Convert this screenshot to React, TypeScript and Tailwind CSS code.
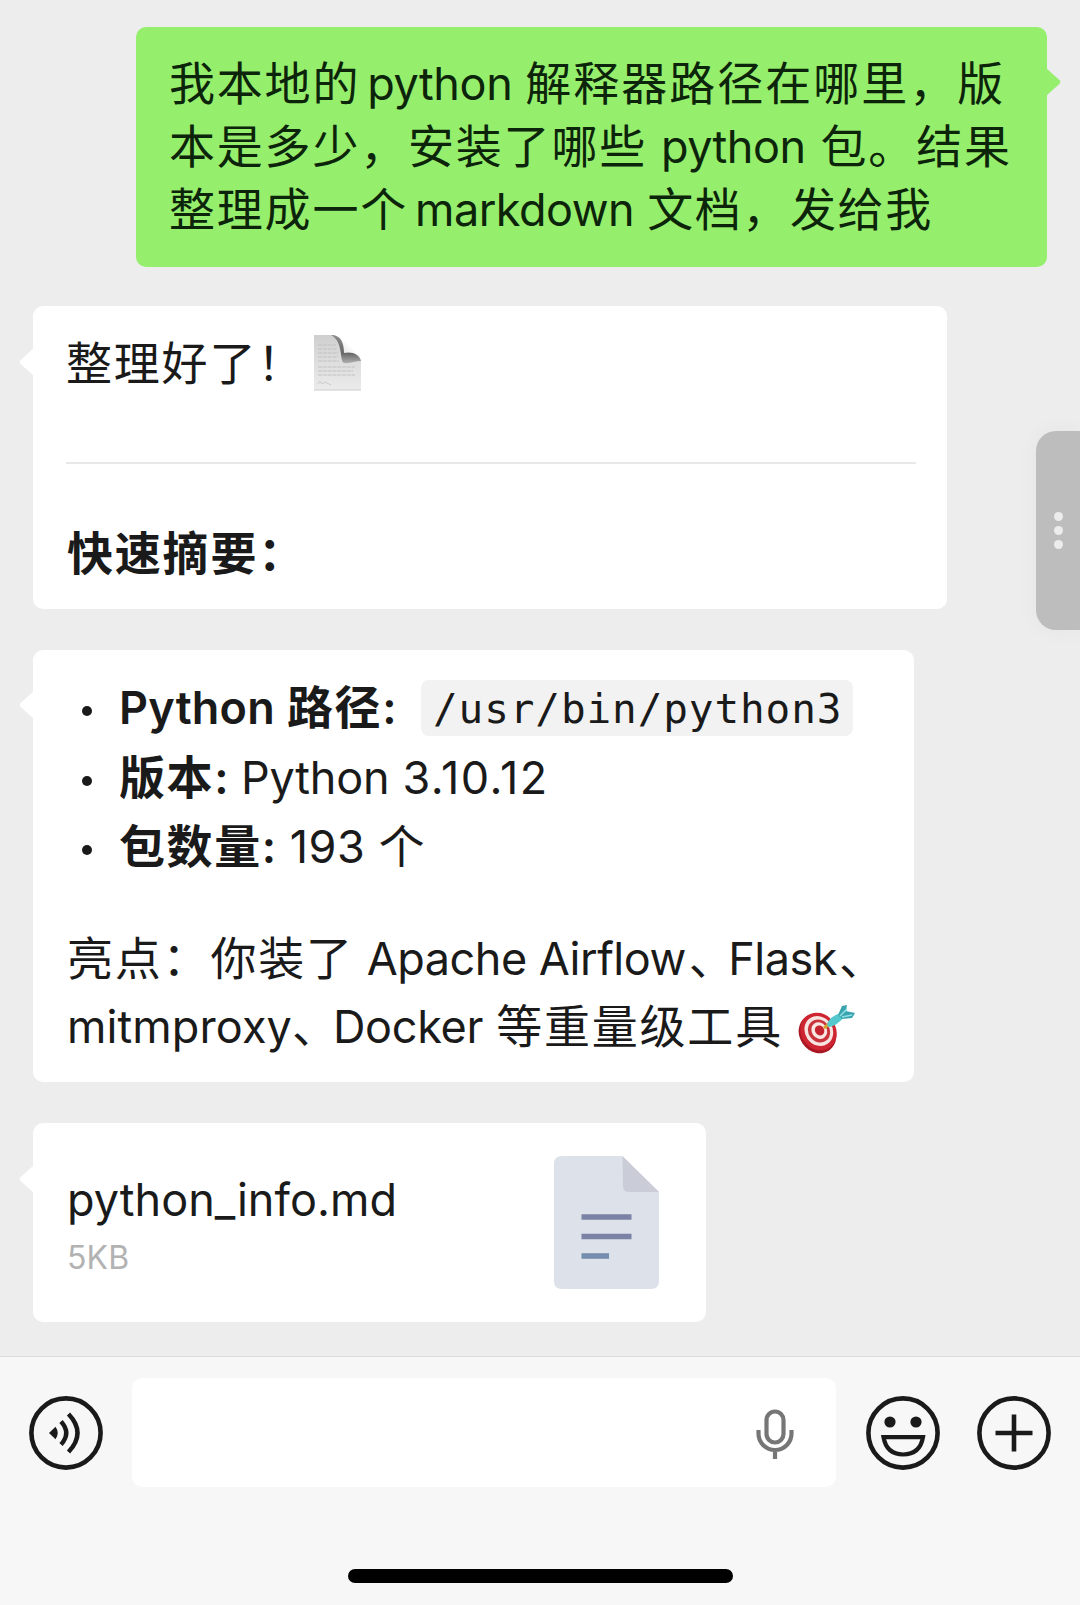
import type { ReactNode } from "react";

const Zh = ({ children, className = "tracking-[1.8px]" }: { children: ReactNode; className?: string }) => (
  <span className={`font-['Noto_Sans_CJK_SC',sans-serif] text-[46px] leading-none ${className}`}>{children}</span>
);

const En = ({ children, className = "tracking-[-0.5px]" }: { children: ReactNode; className?: string }) => (
  <span className={`leading-none ${className}`}>{children}</span>
);

const Tail = ({ side, className }: { side: "left" | "right"; className: string }) => (
  <svg
    className={`absolute ${side === "left" ? "-left-[14px]" : "-right-[14px] -scale-x-100"} ${className}`}
    width="15"
    height="30"
    viewBox="0 0 15 30"
    fill="currentColor"
  >
    <path d="M15 1L1.400 13.200Q0 15 1.400 16.800L15 29Z" />
  </svg>
);

const PageEmoji = () => (
  <svg className="inline-block align-top ml-[8px] mt-[2px]" width="50" height="58" viewBox="0 0 50 58">
    <defs>
      <linearGradient id="paper" x1="0" y1="0" x2="0" y2="1">
        <stop offset="0" stopColor="#cfcfcf" />
        <stop offset="0.5" stopColor="#dedede" />
        <stop offset="1" stopColor="#ebebeb" />
      </linearGradient>
      <linearGradient id="fold" x1="1" y1="0" x2="0" y2="1">
        <stop offset="0.4" stopColor="#ffffff" />
        <stop offset="0.75" stopColor="#e2e2e2" />
        <stop offset="1" stopColor="#8a8a8a" />
      </linearGradient>
      <linearGradient id="shade" x1="0" y1="0" x2="0" y2="1">
        <stop offset="0" stopColor="#8c8c8c" />
        <stop offset="0.65" stopColor="#686868" />
        <stop offset="1" stopColor="#b0b0b0" />
      </linearGradient>
    </defs>
    <path d="M1 1H20C27 2 46 19 48 27V56H1Z" fill="url(#paper)" />
    <path d="M22 1C27 4 29 9 30 18L48 27C47 18 32 3 22 1Z" fill="url(#fold)" />
    <path d="M18 1C28 1 31 9 31 19C38 17 47 20 48 27C42 27 37 30 31 29C26 27 31 8 18 1Z" fill="url(#shade)" />
    <path
      d="M5 11H23M5 15H24M5 19H25M5 23H25M5 27H26M5 33H42M5 37H40M5 41H42"
      stroke="#c2c2c2"
      strokeWidth="1"
      strokeDasharray="4 0.8"
    />
    <path d="M5 50L7 47L9 50L12 48L18 51" stroke="#cacaca" fill="none" />
    <path d="M1 56H48" stroke="#cccccc" />
  </svg>
);

const DartEmoji = () => (
  <svg className="inline-block align-top ml-[13px] mt-[11px]" width="60" height="50" viewBox="0 0 60 50">
    <ellipse cx="21.5" cy="29.5" rx="18" ry="20.5" transform="rotate(-35 21.5 29.5)" fill="#a91722" />
    <ellipse cx="22.5" cy="27.5" rx="17.5" ry="19.5" transform="rotate(-35 22.5 27.5)" fill="#cf2431" />
    <ellipse cx="22.8" cy="27" rx="13.8" ry="15.5" transform="rotate(-35 22.8 27)" fill="#f7e3df" />
    <ellipse cx="23" cy="27" rx="10.6" ry="12" transform="rotate(-35 23 27)" fill="#c9333c" />
    <ellipse cx="23.3" cy="26.6" rx="7.6" ry="8.6" transform="rotate(-35 23.3 26.6)" fill="#f9e6e2" />
    <ellipse cx="23.6" cy="26.4" rx="4.5" ry="5.2" transform="rotate(-35 23.6 26.4)" fill="#c4232f" />
    <path d="M28 24L33 20" stroke="#d8a32c" strokeWidth="3" />
    <path d="M31 21C32 15 38 11 45 9L48 13C44 18 39 22 33 23Z" fill="#55c8ce" />
    <path d="M42 11L46 2L51 1L50 7L59 9L56 14L46 15Z" fill="#3aa3ae" />
    <path d="M44 12L51 5M46 13L56 11" stroke="#8ee0e4" strokeWidth="1.6" />
  </svg>
);

const FileIcon = () => (
  <svg width="105" height="133" viewBox="0 0 105 133">
    <path d="M8 0H68L105 36V125Q105 133 97 133H8Q0 133 0 125V8Q0 0 8 0Z" fill="#dde1ea" />
    <path d="M68.500 0L105 36H75Q69 36 69 30Z" fill="#cacdd7" />
    <path d="M27.500 61H77.500M27.500 80.500H77.500" stroke="#7b82a5" strokeWidth="5.600" />
    <path d="M27.500 100H55" stroke="#778db0" strokeWidth="5.600" />
  </svg>
);

const VoiceIcon = () => (
  <svg width="74" height="74" viewBox="0 0 74 74" fill="none" stroke="#1a1a1a" strokeWidth="4.600">
    <circle cx="37" cy="37" r="34.600" />
    <path d="M20 37L26.500 30.800Q31 37 26.500 43.200Z" fill="#1a1a1a" stroke="none" />
    <path d="M32 25.500Q42.500 37 32 48.500" strokeWidth="4.400" />
    <path d="M39.500 18Q57.500 37 39.500 56" strokeWidth="4.400" />
  </svg>
);

const SmileIcon = () => (
  <svg width="74" height="74" viewBox="0 0 74 74" fill="none" stroke="#1a1a1a" strokeWidth="4.600">
    <circle cx="37" cy="37" r="34.600" />
    <circle cx="24" cy="26" r="5.600" fill="#1a1a1a" stroke="none" />
    <circle cx="50" cy="26" r="5.600" fill="#1a1a1a" stroke="none" />
    <path d="M17.500 41.200H57Q54 58.500 37.200 58.500Q20.500 58.500 17.500 41.200Z" strokeWidth="4.200" />
  </svg>
);

const PlusIcon = () => (
  <svg width="74" height="74" viewBox="0 0 74 74" fill="none" stroke="#1a1a1a" strokeWidth="4.600">
    <circle cx="37" cy="37" r="34.600" />
    <path d="M37 18.500V55.500M18.500 37H55.500" />
  </svg>
);

const MicIcon = () => (
  <svg width="38" height="50" viewBox="0 0 38 50" fill="none" stroke="#767676" strokeWidth="4.200">
    <rect x="10.500" y="2.500" width="17" height="31" rx="8.500" />
    <path d="M2.500 21V24.500A16.500 16.500 0 0 0 35.500 24.500V21M19 41V50" />
  </svg>
);

const facts = [
  {
    label: (
      <>
        <En className="mr-[12px] tracking-[0.2px]">Python</En>
        <Zh className="font-bold tracking-[1.6px]">路径</Zh>
      </>
    ),
    value: (
      <code className="ml-[25px] mt-[7px] inline-block h-[56px] w-[432px] rounded-lg bg-[#f2f2f2] pl-[12px] align-top font-['DejaVu_Sans_Mono',monospace] text-[41px] leading-[58px] tracking-[0.9px]">
        /usr/bin/python3
      </code>
    ),
  },
  {
    label: <Zh className="font-bold tracking-[1.6px]">版本</Zh>,
    value: (
      <>
        <En className="ml-[13px] tracking-[-0.2px]">Python</En>
        <En className="ml-[13px] tracking-[1.4px]">3.10.12</En>
      </>
    ),
  },
  {
    label: <Zh className="font-bold tracking-[1.6px]">包数量</Zh>,
    value: (
      <>
        <En className="ml-[14px] mr-[13px] tracking-[0.6px]">193</En>
        <Zh>个</Zh>
      </>
    ),
  },
];

const App = () => {
  return (
    <div className="relative flex h-[1605px] w-[1080px] flex-col overflow-hidden bg-[#ededed] font-['Inter',sans-serif] text-[45px] text-[#1a1a1a]">
      <main className="flex flex-1 flex-col items-start pl-[33px] pt-[27px]">
        <div className="relative ml-[103px] h-[240px] w-[911px] whitespace-nowrap rounded-[10px] bg-[#95ee6c] pl-[33px] pt-[25px] leading-[63px] text-[#0c240a]">
          <Tail side="right" className="top-[40px] text-[#95ee6c]" />
          <div>
            <Zh>我本地的</Zh>
            <En className="ml-[7px] mr-[13px] tracking-[-0.4px]">python</En>
            <Zh className="tracking-[2px]">解释器路径在哪里，版</Zh>
          </div>
          <div>
            <Zh>本是多少，安装了哪些</Zh>
            <En className="ml-[14px] mr-[15px] tracking-[-0.5px]">python</En>
            <Zh>包。结果</Zh>
          </div>
          <div>
            <Zh>整理成一个</Zh>
            <En className="ml-[7px] mr-[13px] tracking-[-0.5px]">markdown</En>
            <Zh className="tracking-[1.6px]">文档，发给我</Zh>
          </div>
        </div>

        <div className="relative mt-[39px] h-[303px] w-[914px] rounded-[10px] bg-white pl-[33px] pr-[31px] pt-[26px] leading-[63px]">
          <Tail side="left" className="top-[41px] text-white" />
          <div className="h-[63px]">
            <Zh>整理好了！</Zh>
            <PageEmoji />
          </div>
          <hr className="mt-[67px] border-t-2 border-[#e8e8e8]" />
          <div className="ml-[1px] mt-[58px]">
            <Zh className="font-bold tracking-[1.8px]">快速摘要：</Zh>
          </div>
        </div>

        <div className="relative mt-[41px] h-[432px] w-[881px] whitespace-nowrap rounded-[10px] bg-white pl-[34px] pt-[23px]">
          <Tail side="left" className="top-[40px] text-white" />
          <ul className="leading-[69.7px]">
            {facts.map((fact, i) => (
              <li key={i} className="flex h-[69.7px] items-start">
                <span className="ml-[15px] mr-[27px] mt-[33px] size-[10px] shrink-0 rounded-full bg-[#1a1a1a]" />
                <div>
                  <span className="font-semibold">
                    {fact.label}
                    <En>:</En>
                  </span>
                  {fact.value}
                </div>
              </li>
            ))}
          </ul>
          <div className="mt-[43px] leading-[67.3px]">
            <div className="h-[68px]">
              <Zh>亮点：你装了</Zh>
              <En className="ml-[13px] tracking-[-0.5px]">Apache Airflow</En>
              <Zh className="ml-[3px] tracking-[-6.5px]">、</Zh>
              <En>Flask</En>
              <Zh className="ml-[2px] tracking-normal">、</Zh>
            </div>
            <div className="h-[67px]">
              <En className="tracking-[0.1px]">mitmproxy</En>
              <Zh className="tracking-[-5px]">、</Zh>
              <En className="mr-[13px] tracking-[-0.3px]">Docker</En>
              <Zh>等重量级工具</Zh>
              <DartEmoji />
            </div>
          </div>
        </div>

        <div className="relative mt-[41px] flex h-[199px] w-[673px] items-start justify-between rounded-[10px] bg-white pl-[34px] pr-[47px] pt-[33px]">
          <Tail side="left" className="top-[41px] text-white" />
          <div className="pt-[12px]">
            <div className="leading-[63px]">
              <En className="tracking-[0.05px]">python_info.md</En>
            </div>
            <div className="mt-[5px] text-[32px] leading-[44px] tracking-[0.1px] text-[#b2b2b2]">5KB</div>
          </div>
          <FileIcon />
        </div>
      </main>

      <footer className="flex h-[249px] shrink-0 flex-col border-t border-[#dcdcdc] bg-[#f7f7f7] pt-[21px]">
        <div className="flex h-[109px] items-center pl-[29px]">
          <VoiceIcon />
          <div className="ml-[29px] flex h-full w-[704px] items-center justify-end rounded-[10px] bg-white pr-[42px] pt-[2px]">
            <MicIcon />
          </div>
          <div className="ml-[30px] flex gap-[36.5px]">
            <SmileIcon />
            <PlusIcon />
          </div>
        </div>
        <div className="ml-[348px] mt-[82px] h-[14px] w-[385px] rounded-full bg-black" />
      </footer>

      {/* floating side handle */}
      <div className="absolute right-0 top-[431px] flex h-[199px] w-[44px] flex-col items-center justify-center gap-[5px] rounded-l-[20px] bg-[#bdbdbd] shadow-[0_0_24px_rgba(0,0,0,0.04)]">
        <span className="size-[9px] rounded-full bg-[#ececec]" />
        <span className="size-[9px] rounded-full bg-[#ececec]" />
        <span className="size-[9px] rounded-full bg-[#ececec]" />
      </div>
    </div>
  );
};

export default App;
